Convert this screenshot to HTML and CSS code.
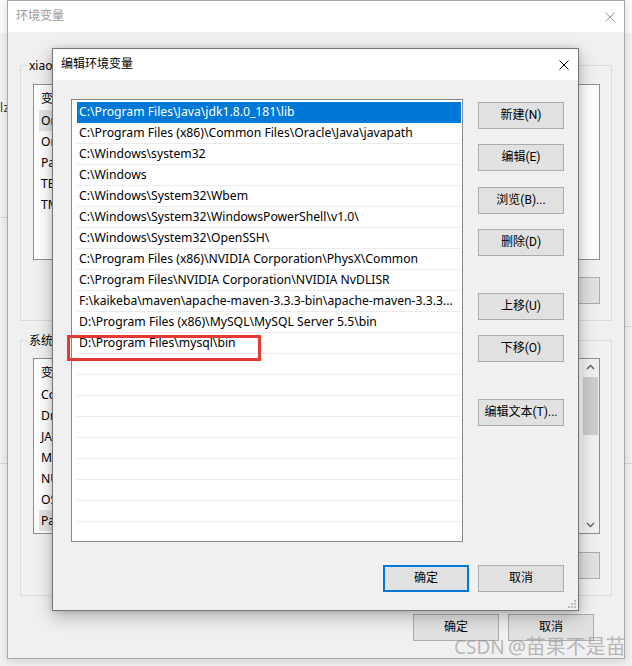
FILE: index.html
```html
<!DOCTYPE html>
<html lang="zh-CN">
<head>
<meta charset="utf-8">
<title>编辑环境变量</title>
<link rel="stylesheet" href="styles.css">
</head>
<body>
<div class="desk">
  <div class="desk-top"></div>
  <span class="desk-text">lz</span>
  <div class="desk-line dl1"></div>
  <div class="desk-line dl2"></div>
  <div class="desk-line dl3"></div>
  <div class="desk-line dl4"></div>
</div>

<div class="win back">
  <div class="titlebar">
    <span class="title dim">环境变量</span>
    <svg class="close" width="10" height="10" viewBox="0 0 10 10"><path d="M0.5 0.5L9.5 9.5M9.5 0.5L0.5 9.5" stroke="#9a9a9a" stroke-width="1" fill="none"/></svg>
  </div>
  <div class="back-body">
    <div class="group">
      <div class="legend">xiao</div>
      <div class="blist">
        <div class="bhead"><span>变量</span></div>
        <div class="brow"><span class="sel">One</span></div>
        <div class="brow"><span>One</span></div>
        <div class="brow"><span>Path</span></div>
        <div class="brow"><span>TEMP</span></div>
        <div class="brow"><span>TMP</span></div>
      </div>
      <div class="btns">
        <button class="btn">新建(N)...</button>
        <button class="btn">编辑(E)...</button>
        <button class="btn">删除(D)</button>
      </div>
    </div>

    <div class="group sys">
      <div class="legend">系统</div>
      <div class="blist has-scroll">
        <div class="bcontent">
          <div class="bhead"><span>变量</span></div>
          <div class="brow"><span>Com</span></div>
          <div class="brow"><span>Drv</span></div>
          <div class="brow"><span>JAV</span></div>
          <div class="brow"><span>MA</span></div>
          <div class="brow"><span>NU</span></div>
          <div class="brow"><span>OS</span></div>
          <div class="brow"><span class="sel">Path</span></div>
        </div>
        <div class="vscroll">
          <svg class="arrow" width="17" height="17" viewBox="0 0 17 17"><path d="M5 10L8.5 6.5L12 10" stroke="#606060" stroke-width="1.4" fill="none"/></svg>
          <div class="thumb"></div>
          <div class="track"></div>
          <svg class="arrow" width="17" height="17" viewBox="0 0 17 17"><path d="M5 7L8.5 10.5L12 7" stroke="#606060" stroke-width="1.4" fill="none"/></svg>
        </div>
      </div>
      <div class="btns">
        <button class="btn">新建(W)...</button>
        <button class="btn">编辑(I)...</button>
        <button class="btn">删除(L)</button>
      </div>
    </div>

    <div class="foot">
      <button class="btn">确定</button>
      <button class="btn">取消</button>
    </div>
  </div>
</div>

<div class="win front">
  <div class="titlebar">
    <span class="title">编辑环境变量</span>
    <svg class="close" width="10" height="10" viewBox="0 0 10 10"><path d="M0.5 0.5L9.5 9.5M9.5 0.5L0.5 9.5" stroke="#000" stroke-width="1" fill="none"/></svg>
  </div>
  <div class="front-body">
    <div class="plist">
      <div class="prow sel">C:\Program Files\Java\jdk1.8.0_181\lib</div>
      <div class="prow">C:\Program Files (x86)\Common Files\Oracle\Java\javapath</div>
      <div class="prow">C:\Windows\system32</div>
      <div class="prow">C:\Windows</div>
      <div class="prow">C:\Windows\System32\Wbem</div>
      <div class="prow">C:\Windows\System32\WindowsPowerShell\v1.0\</div>
      <div class="prow">C:\Windows\System32\OpenSSH\</div>
      <div class="prow">C:\Program Files (x86)\NVIDIA Corporation\PhysX\Common</div>
      <div class="prow">C:\Program Files\NVIDIA Corporation\NVIDIA NvDLISR</div>
      <div class="prow">F:\kaikeba\maven\apache-maven-3.3.3-bin\apache-maven-3.3.3...</div>
      <div class="prow">D:\Program Files (x86)\MySQL\MySQL Server 5.5\bin</div>
      <div class="prow">D:\Program Files\mysql\bin</div>
      <div class="prow"></div>
      <div class="prow"></div>
      <div class="prow"></div>
      <div class="prow"></div>
      <div class="prow"></div>
      <div class="prow"></div>
      <div class="prow"></div>
      <div class="prow"></div>
      <div class="prow"></div>
    </div>
    <div class="side">
      <button class="btn s1">新建(N)</button>
      <button class="btn s2">编辑(E)</button>
      <button class="btn s3">浏览(B)...</button>
      <button class="btn s4">删除(D)</button>
      <button class="btn s5">上移(U)</button>
      <button class="btn s6">下移(O)</button>
      <button class="btn s7">编辑文本(T)...</button>
    </div>
    <div class="ffoot">
      <button class="btn def">确定</button>
      <button class="btn">取消</button>
    </div>
  </div>
  <svg class="grip" width="8" height="8" viewBox="0 0 8 8">
    <rect x="6" y="0" width="2" height="2" fill="#bdbdbd"/>
    <rect x="3" y="3" width="2" height="2" fill="#bdbdbd"/>
    <rect x="6" y="3" width="2" height="2" fill="#bdbdbd"/>
    <rect x="0" y="6" width="2" height="2" fill="#bdbdbd"/>
    <rect x="3" y="6" width="2" height="2" fill="#bdbdbd"/>
    <rect x="6" y="6" width="2" height="2" fill="#bdbdbd"/>
  </svg>
</div>

<div class="redbox"></div>
<div class="watermark"><span class="wm-latin">CSDN</span> <span class="wm-cjk">@苗果不是苗</span></div>
</body>
</html>
```

FILE: styles.css
```css
* { box-sizing: border-box; }
html, body { margin: 0; padding: 0; }
body {
  width: 632px;
  height: 666px;
  position: relative;
  overflow: hidden;
  background: #f4f4f4;
  font-family: "Noto Sans", "Noto Sans CJK SC", sans-serif;
  font-size: 12px;
  color: #000;
}

/* desktop / far window behind */
.desk { position: absolute; inset: 0; background: #f0f0f0; }
.desk-top { height: 33px; background: #fafafa; }
.desk-text { position: absolute; left: 0; top: 100px; line-height: 16px; color: #333; letter-spacing: 0.5px; }
.desk-line { position: absolute; height: 1px; background: #d6d6d6; }
.dl1 { left: 0; width: 7px; top: 217px; }
.dl2 { left: 0; width: 7px; top: 463px; }
.dl3 { left: 625px; width: 7px; top: 326px; }
.dl4 { left: 625px; width: 7px; top: 463px; }

/* windows */
.win {
  position: absolute;
  background: #f0f0f0;
  border: 1px solid #a9a9a9;
}
.back {
  left: 7px; top: 0; width: 618px; height: 659px;
  box-shadow: 0 2px 7px rgba(0,0,0,0.14);
}
.front {
  left: 52px; top: 48px; width: 527px; height: 563px;
  border-color: #767676;
  box-shadow: 0 6px 16px rgba(0,0,0,0.26), 0 0 6px rgba(0,0,0,0.12);
}

.titlebar {
  height: 31px;
  background: #fff;
  display: flex;
  align-items: center;
  justify-content: space-between;
  padding: 0 9px 0 8px;
}
.title {
  font-family: "Noto Sans CJK SC", sans-serif;
  font-size: 12px;
  line-height: 16px;
  margin-top: -3px;
}
.title.dim { color: #9a9a9a; }
.close { display: block; }

/* back window body */
.back-body { padding: 33px 12px 0 12px; }
.group {
  border: 1px solid #dcdcdc;
  height: 256px;
  padding: 0 11px 0 12px;
}
.group.sys { margin-top: 19px; }
.legend {
  width: fit-content;
  margin: -8px 0 0 -6px;
  padding: 0 2px;
  line-height: 16px;
  height: 16px;
  background: #f0f0f0;
  white-space: nowrap;
  font-family: "Noto Sans", "Noto Sans CJK SC", sans-serif;
  font-size: 12px;
}
.blist {
  margin-top: 10px;
  height: 176px;
  background: #fff;
  border: 1px solid #8f8f8f;
  overflow: hidden;
}
.sys .blist { margin-top: 9px; }
.blist.has-scroll { display: flex; }
.bcontent { flex: 1; min-width: 0; }
.bhead, .brow {
  margin-left: 5px;
  white-space: nowrap;
  font-size: 12.2px;
}
.bhead span, .brow span { display: inline-block; padding-left: 2px; padding-right: 4px; }
.bhead { height: 25px; line-height: 26px; font-family: "Noto Sans CJK SC", sans-serif; font-size: 12px; }
.brow { height: 21px; line-height: 21px; }
.brow .sel { background: #e5e5e5; width: 140px; }

.vscroll {
  width: 17px;
  flex: none;
  background: #f0f0f0;
  display: flex;
  flex-direction: column;
  margin-left: 1px;
}
.arrow { display: block; flex: none; }
.thumb { height: 58px; margin: 1px 1px 0 1px; background: #cdcdcd; flex: none; }
.track { flex: 1; }

.btns {
  display: flex;
  justify-content: flex-end;
  gap: 10px;
  margin-top: 17px;
}
.sys .btns { margin-top: 18px; }
.foot {
  display: flex;
  justify-content: flex-end;
  gap: 9px;
  margin-top: 18px;
  padding-right: 18px;
}

.btn {
  width: 86px;
  height: 27px;
  padding: 0;
  margin: 0;
  border: 1px solid #adadad;
  background: #e1e1e1;
  font-family: Roboto, "Noto Sans CJK SC", sans-serif;
  font-size: 12px;
  line-height: 25px;
  color: #000;
  text-align: center;
  white-space: nowrap;
}

/* front dialog */
.front-body {
  display: grid;
  grid-template-columns: 392px 86px;
  column-gap: 15px;
  padding: 19px 14px 0 18px;
}
.plist {
  height: 443px;
  background: #fff;
  border: 1px solid #828790;
  padding: 2px 1px 0 5px;
  overflow: hidden;
}
.prow {
  height: 21px;
  line-height: 20px;
  padding-left: 2px;
  border-bottom: 1px solid #ececec;
  white-space: nowrap;
  overflow: hidden;
  text-overflow: ellipsis;
  font-size: 12.2px;
}
.prow.sel { background: #0078d7; border-bottom-color: #0078d7; color: #fff; }

.side { display: flex; flex-direction: column; }
.s1 { margin-top: 3px; }
.s2 { margin-top: 15px; }
.s3 { margin-top: 16px; }
.s4 { margin-top: 15px; }
.s5 { margin-top: 37px; }
.s6 { margin-top: 15px; }
.s7 { margin-top: 37px; }

.ffoot {
  grid-column: 1 / -1;
  display: flex;
  justify-content: flex-end;
  gap: 9px;
  margin-top: 23px;
}
.btn.def { border: 2px solid #0078d7; line-height: 23px; }

.grip { position: absolute; right: 2px; bottom: 2px; }

.redbox {
  position: absolute;
  left: 67px; top: 335px;
  width: 194px; height: 26px;
  border: 3px solid #e53935;
}

.watermark {
  position: absolute;
  left: 454px;
  top: 635px;
  white-space: nowrap;
  color: rgba(150,150,150,0.65);
  line-height: 24px;
  font-family: "Noto Sans", "Noto Sans CJK SC", sans-serif;
}
.wm-latin { font-size: 19px; }
.wm-cjk { font-size: 20px; }
```
